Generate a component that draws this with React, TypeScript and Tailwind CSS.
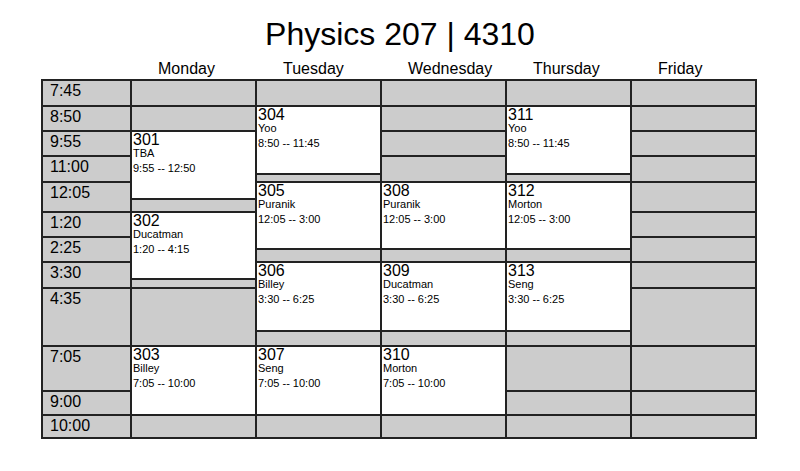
import React from "react";

type Course = { n: string; who: string; t: string };
type Cell = { h: string; c?: Course; label?: string };

const timeCells: Cell[] = [
  { h: "h-[26px]", label: "7:45" },
  { h: "h-[25px]", label: "8:50" },
  { h: "h-[25px]", label: "9:55" },
  { h: "h-[26px]", label: "11:00" },
  { h: "h-[30px]", label: "12:05" },
  { h: "h-[25px]", label: "1:20" },
  { h: "h-[25px]", label: "2:25" },
  { h: "h-[26px]", label: "3:30" },
  { h: "h-[58px]", label: "4:35" },
  { h: "h-[45px]", label: "7:05" },
  { h: "h-[24px]", label: "9:00" },
  { h: "h-[23px]", label: "10:00" },
];

const days: { name: string; cells: Cell[] }[] = [
  {
    name: "Monday",
    cells: [
      { h: "h-[26px]" },
      { h: "h-[25px]" },
      { h: "h-[68px]", c: { n: "301", who: "TBA", t: "9:55 -- 12:50" } },
      { h: "h-[13px]" },
      { h: "h-[67px]", c: { n: "302", who: "Ducatman", t: "1:20 -- 4:15" } },
      { h: "h-[9px]" },
      { h: "h-[58px]" },
      { h: "h-[69px]", c: { n: "303", who: "Billey", t: "7:05 -- 10:00" } },
      { h: "h-[23px]" },
    ],
  },
  {
    name: "Tuesday",
    cells: [
      { h: "h-[26px]" },
      { h: "h-[68px]", c: { n: "304", who: "Yoo", t: "8:50 -- 11:45" } },
      { h: "h-[8px]" },
      { h: "h-[67px]", c: { n: "305", who: "Puranik", t: "12:05 -- 3:00" } },
      { h: "h-[13px]" },
      { h: "h-[69px]", c: { n: "306", who: "Billey", t: "3:30 -- 6:25" } },
      { h: "h-[15px]" },
      { h: "h-[69px]", c: { n: "307", who: "Seng", t: "7:05 -- 10:00" } },
      { h: "h-[23px]" },
    ],
  },
  {
    name: "Wednesday",
    cells: [
      { h: "h-[26px]" },
      { h: "h-[25px]" },
      { h: "h-[25px]" },
      { h: "h-[26px]" },
      { h: "h-[67px]", c: { n: "308", who: "Puranik", t: "12:05 -- 3:00" } },
      { h: "h-[13px]" },
      { h: "h-[69px]", c: { n: "309", who: "Ducatman", t: "3:30 -- 6:25" } },
      { h: "h-[15px]" },
      { h: "h-[69px]", c: { n: "310", who: "Morton", t: "7:05 -- 10:00" } },
      { h: "h-[23px]" },
    ],
  },
  {
    name: "Thursday",
    cells: [
      { h: "h-[26px]" },
      { h: "h-[68px]", c: { n: "311", who: "Yoo", t: "8:50 -- 11:45" } },
      { h: "h-[8px]" },
      { h: "h-[67px]", c: { n: "312", who: "Morton", t: "12:05 -- 3:00" } },
      { h: "h-[13px]" },
      { h: "h-[69px]", c: { n: "313", who: "Seng", t: "3:30 -- 6:25" } },
      { h: "h-[15px]" },
      { h: "h-[45px]" },
      { h: "h-[24px]" },
      { h: "h-[23px]" },
    ],
  },
  {
    name: "Friday",
    cells: timeCells.map((c) => ({ h: c.h })),
  },
];

function DayCell({ cell }: { cell: Cell }) {
  if (!cell.c) {
    return <div className={`${cell.h} shrink-0 border-t-2 border-[#222] bg-[#cccccc]`} />;
  }
  return (
    <div className={`${cell.h} shrink-0 border-t-2 border-[#222] bg-white pl-[1px] text-black`}>
      <div className="text-[16px] leading-[15px]">{cell.c.n}</div>
      <div className="text-[11px] leading-[12px]">{cell.c.who}</div>
      <div className="mt-[3px] text-[11px] leading-[12px]">{cell.c.t}</div>
    </div>
  );
}

export default function App() {
  return (
    <div className="w-[800px] h-[471px] bg-white text-black pt-[16px] font-['Liberation_Sans',Arial,sans-serif]">
      <h1 className="h-[36px] text-center text-[32px] leading-[36px]">Physics 207 | 4310</h1>
      <div className="mt-[8px] flex h-[18px] pl-[130px] text-[16px] leading-[18px]">
        {days.map((d) => (
          <div key={d.name} className="w-[125px] pl-[28px]">
            {d.name}
          </div>
        ))}
      </div>
      <div className="ml-[41px] mt-[1px] flex w-fit border-r-2 border-b-2 border-[#222]">
        <div className="flex w-[89px] flex-col border-l-2 border-[#222]">
          {timeCells.map((c) => (
            <div
              key={c.label}
              className={`${c.h} shrink-0 border-t-2 border-[#222] bg-[#cccccc] pl-[7px] pt-[1px] text-[16px] leading-[18px]`}
            >
              {c.label}
            </div>
          ))}
        </div>
        {days.map((d) => (
          <div key={d.name} className="flex w-[125px] flex-col border-l-2 border-[#222]">
            {d.cells.map((c, i) => (
              <DayCell key={i} cell={c} />
            ))}
          </div>
        ))}
      </div>
    </div>
  );
}
